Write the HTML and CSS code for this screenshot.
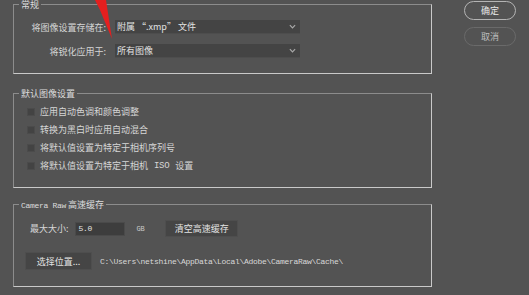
FILE: index.html
```
<!DOCTYPE html>
<html lang="zh-CN">
  <head>
    <meta charset="UTF-8" />
    <title>Camera Raw 首选项</title>
    <link rel="stylesheet" href="styles.css">
  </head>
  <body>
    <div class="page">
      <div class="main">
        <fieldset class="group group-general">
          <legend>常规</legend>
          <div class="form-grid">
            <label class="field-label">将图像设置存储在:</label>
            <div class="select">
              <span>附属 “.xmp” 文件</span>
              <svg class="chevron" viewBox="0 0 8 5"><polyline points="1,1 4,4 7,1" /></svg>
            </div>
            <label class="field-label">将锐化应用于:</label>
            <div class="select">
              <span>所有图像</span>
              <svg class="chevron" viewBox="0 0 8 5"><polyline points="1,1 4,4 7,1" /></svg>
            </div>
          </div>
        </fieldset>

        <fieldset class="group group-defaults">
          <legend>默认图像设置</legend>
          <div class="check-list">
            <div class="check-row"><span class="checkbox"></span>应用自动色调和颜色调整</div>
            <div class="check-row"><span class="checkbox"></span>转换为黑白时应用自动混合</div>
            <div class="check-row"><span class="checkbox"></span>将默认值设置为特定于相机序列号</div>
            <div class="check-row"><span class="checkbox"></span>将默认值设置为特定于相机 <span class="mono">ISO</span> 设置</div>
          </div>
        </fieldset>

        <fieldset class="group group-cache">
          <legend><span class="mono">Camera Raw</span> 高速缓存</legend>
          <div class="cache-body">
            <div class="cache-row">
              <span class="size-label">最大大小:</span>
              <div class="text-input mono">5.0</div>
              <span class="unit mono">GB</span>
              <button class="btn btn-purge">清空高速缓存</button>
            </div>
            <div class="cache-row cache-row-path">
              <button class="btn btn-location">选择位置...</button>
              <span class="path mono">C:\Users\netshine\AppData\Local\Adobe\CameraRaw\Cache\</span>
            </div>
          </div>
        </fieldset>
      </div>

      <div class="side">
        <button class="pill pill-ok">确定</button>
        <button class="pill pill-cancel">取消</button>
      </div>
    </div>

    <!-- red annotation arrow over the dialog -->
    <svg class="arrow" width="529" height="295" viewBox="0 0 529 295">
      <polygon points="95,0 106,0 112,39 100,10" fill="#e41f1f" />
    </svg>
  </body>
</html>
```

FILE: styles.css
```
body {
  margin: 0;
  padding: 0;
  background-color: #535353;
  font-family: "Noto Sans CJK SC", "Noto Sans", sans-serif;
  font-size: 9px;
  color: #d6d6d6;
  width: 529px;
  height: 295px;
  overflow: hidden;
  position: relative;
}

.mono {
  font-family: "Liberation Mono", "Noto Sans CJK SC", monospace;
  font-size: 8px;
  letter-spacing: -0.3px;
}

.page {
  display: flex;
  align-items: flex-start;
  padding-left: 13px;
}

.main {
  width: 419px;
  margin-top: -1px;
}

/* group boxes */
.group {
  margin: 0;
  padding: 0;
  min-width: 0;
  border: 1px solid #8c8c8c;
  border-right-color: #c9c9c9;
  border-bottom-color: #c9c9c9;
}

.group legend {
  margin-left: 5px;
  padding: 0 2px;
  line-height: 11px;
  height: 11px;
  color: #dcdcdc;
}

.group-general {
  padding: 10px 0 15px 0;
}

.group-defaults {
  margin-top: 14px;
  padding: 4px 0 12px 0;
}

.group-cache {
  margin-top: 11px;
  padding: 10px 0 16px 0;
}

/* general settings */
.form-grid {
  display: grid;
  grid-template-columns: 92px 185px;
  column-gap: 9px;
  row-gap: 10px;
  align-items: center;
}

.field-label {
  text-align: right;
  line-height: 13px;
}

.select {
  height: 13px;
  background-color: #444444;
  border-bottom: 1px solid #4d4d4d;
  display: flex;
  align-items: center;
  justify-content: space-between;
  padding: 0 4px 0 2px;
  line-height: 13px;
  color: #e2e2e2;
}

.chevron {
  width: 7px;
  height: 5px;
  fill: none;
  stroke: #a8a8a8;
  stroke-width: 1.4;
}

/* default image settings */
.check-list {
  padding-left: 13px;
}

.check-row {
  display: flex;
  align-items: center;
  gap: 5px;
  height: 18px;
  line-height: 18px;
}

.checkbox {
  width: 8px;
  height: 8px;
  background-color: #434343;
  border: 1px solid #4b4b4b;
  box-sizing: border-box;
}

.check-row .mono {
  margin: 0 1px;
  font-size: 9px;
}

/* cache */
.cache-body {
  padding-left: 11px;
}

.cache-row {
  display: flex;
  align-items: center;
}

.size-label {
  margin-left: 5px;
  line-height: 14px;
}

.text-input {
  margin-left: 6px;
  width: 50px;
  height: 14px;
  box-sizing: border-box;
  background-color: #3d3d3d;
  border: 1px solid #4a4a4a;
  padding-left: 3px;
  line-height: 12px;
  color: #e4e4e4;
}

.unit {
  margin-left: 12px;
  font-size: 7px;
  color: #c8c8c8;
}

.btn {
  font-family: "Noto Sans CJK SC", "Noto Sans", sans-serif;
  font-size: 9px;
  color: #e2e2e2;
  background-color: #454545;
  border: 1px solid #4e4e4e;
  padding: 0;
  line-height: 15px;
  cursor: pointer;
}

.btn-purge {
  margin-left: 21px;
  width: 73px;
  height: 17px;
}

.cache-row-path {
  margin-top: 15px;
}

.btn-location {
  width: 67px;
  height: 18px;
}

.path {
  margin-left: 8px;
  color: #d8d8d8;
}

/* dialog buttons */
.side {
  margin-left: 32px;
  padding-top: 1px;
  display: flex;
  flex-direction: column;
  gap: 7px;
}

.pill {
  width: 52px;
  height: 19px;
  border-radius: 10px;
  background-color: #535353;
  font-family: "Noto Sans CJK SC", "Noto Sans", sans-serif;
  font-size: 9px;
  padding: 0;
  line-height: 15px;
  cursor: pointer;
}

.pill-ok {
  border: 1.5px solid #b4b4b4;
  color: #e8e8e8;
}

.pill-cancel {
  border: 1px solid #6a6a6a;
  color: #bdbdbd;
}

.arrow {
  position: absolute;
  left: 0;
  top: 0;
  pointer-events: none;
}
```
